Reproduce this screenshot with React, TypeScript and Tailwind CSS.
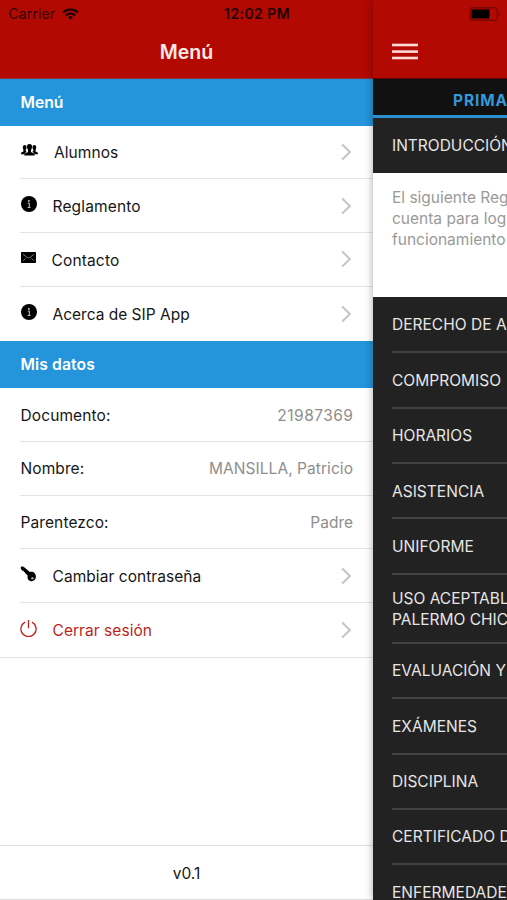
import type { ReactNode } from 'react';

const REGLAMENTO_ITEMS = ['DERECHO DE ADMISIÓN', 'COMPROMISO', 'HORARIOS', 'ASISTENCIA', 'UNIFORME'];

const REGLAMENTO_ITEMS_MORE = [
  'EVALUACIÓN Y PROMOCIÓN',
  'EXÁMENES',
  'DISCIPLINA',
  'CERTIFICADO DE SALUD',
  'ENFERMEDADES',
];

function PeopleIcon() {
  return (
    <svg viewBox="0 0 17 12" className="w-[17px] h-3 ml-px" fill="#000">
      <path d="M3.700 1c1.300 0 1.900.9 1.800 2.400 0 1-.3 1.800-.8 2.300v1.300l1 .8C4.900 8.300 3.800 9 3.500 10.300H0C0 8.900.4 8.400 1.300 8.100l1.100-.7V5.700C2 5.200 1.800 4.400 1.800 3.400 1.700 1.900 2.400 1 3.700 1z" />
      <path d="M13.300 1c-1.300 0-1.900.9-1.800 2.400 0 1 .3 1.800.8 2.300v1.300l-1 .8c.8.5 1.900 1.200 2.200 2.500H17c0-1.400-.4-1.900-1.300-2.200l-1.100-.7V5.700c.4-.5.6-1.300.6-2.300C15.300 1.900 14.600 1 13.300 1z" />
      <path d="M8.500 0c1.800 0 2.700 1.200 2.500 3.100-.1 1.400-.5 2.300-1 2.900v2l2 1c1.200.5 1.800 1.200 1.800 2.600H3.200c0-1.400.6-2.100 1.800-2.600l2-1V6c-.5-.6-.9-1.500-1-2.900C5.800 1.200 6.700 0 8.500 0z" />
    </svg>
  );
}

function InfoIcon() {
  return (
    <svg viewBox="0 0 16 16" className="w-4 h-4 ml-[0.500px]">
      <circle cx="8" cy="8" r="8" fill="#000" />
      <circle cx="7.900" cy="4.900" r="0.900" fill="#ddd" />
      <path d="M6.800 7.100h1.500v4.200M6.700 11.400h2.800" fill="none" stroke="#ccc" strokeWidth="1" />
    </svg>
  );
}

function MailIcon() {
  return (
    <svg viewBox="0 0 15 11" className="w-[15px] h-[11px] ml-[0.500px]">
      <rect width="15" height="11" rx="0.800" fill="#000" />
      <path d="M2 2.300l3.800 2.900c1.200.9 2.200.9 3.400 0L13 2.300M2.200 8.800l2.200-2.300M12.800 8.800l-2.200-2.300" fill="none" stroke="#999" strokeWidth="0.800" />
    </svg>
  );
}

function KeyIcon() {
  return (
    <svg viewBox="0 0 17 16" className="w-[17px] h-4">
      <path d="M.7 1.200L1.900.2l2 .8 6 5c1.700-.4 3.600 0 4.800 1.200 1.600 1.600 1.600 4.800.2 6.400-1.500 1.900-4.100 2.200-5.800.9-1.500-1.200-2-3.100-1.400-4.800L5.800 7.400l-.8-.2v-1l-1.100-.2-.1-1.100-1.200-.2L1 3.200z" fill="#000" />
      <circle cx="12.400" cy="12.300" r="1.200" fill="#aaa" />
    </svg>
  );
}

function PowerIcon() {
  return (
    <svg viewBox="0 0 17 17" className="w-[17px] h-[17px]" fill="none" stroke="currentColor" strokeWidth="1.300">
      <path d="M8.500 0v8.300M5 2.200a7.600 7.600 0 1 0 7 0" />
    </svg>
  );
}

function Chevron() {
  return (
    <svg viewBox="0 0 11 18" className="w-[11px] h-[18px] ml-auto -mt-px text-[#c5c5c9]" fill="none" stroke="currentColor" strokeWidth="2">
      <path d="M1.200 1.500L8.900 9l-7.700 7.500" />
    </svg>
  );
}

function SectionTitle({ children }: { children: ReactNode }) {
  return (
    <h2 className="h-full flex items-center pl-[20.500px] pt-[1.500px] text-[15.700px] font-semibold text-white">{children}</h2>
  );
}

type MenuRowProps = {
  icon: ReactNode;
  label: string;
  labelClass: string;
  className?: string;
  borderClass?: string;
};

function MenuRow({ icon, label, labelClass, className = '', borderClass = 'border-b border-[#e4e4e6]' }: MenuRowProps) {
  return (
    <div className={`h-[53.750px] ml-5 pr-[21px] pt-px flex items-center ${borderClass} ${className}`}>
      <span className="w-8 shrink-0 pb-[4px]">{icon}</span>
      <span className={`pt-px ${labelClass}`}>{label}</span>
      <Chevron />
    </div>
  );
}

function DataRow({ label, value, valueClass }: { label: string; value: string; valueClass: string }) {
  return (
    <div className="h-[53.750px] ml-5 pl-[0.500px] pr-5 pt-[1.500px] flex items-center justify-between border-b border-[#e4e4e6]">
      <span className="tracking-[0.100px]">{label}</span>
      <span className={`text-[#8e8e8e] ${valueClass}`}>{value}</span>
    </div>
  );
}

function SideMenu() {
  return (
    <aside className="w-[373px] h-full shrink-0 flex flex-col bg-white text-[15.500px] text-[#161616]">
      <header className="h-[79px] bg-[#b20903] border-b border-[#8d3233]">
        <div className="h-[27px] pl-[8.500px] flex items-center text-[14px] text-[#330200]">
          <span className="tracking-[0.100px]">Carrier</span>
          <svg viewBox="0 0 18 13" className="w-[17px] h-3 ml-[7px]" fill="none" stroke="#160000" strokeWidth="2.300">
            <path d="M1 4.800a11.500 11.500 0 0 1 16 0M4 8a7.200 7.200 0 0 1 10 0" />
            <path d="M9 12.500l-2.600-2.600a3.700 3.700 0 0 1 5.200 0z" fill="#160000" stroke="none" />
          </svg>
          <span className="ml-[145px] font-semibold text-[#200100] whitespace-nowrap tracking-[0.420px]">12:02 PM</span>
        </div>
        <h1 className="h-[50px] text-center text-[19.500px] leading-[50px] font-semibold text-[#ffe9e7]">Menú</h1>
      </header>
      <div className="h-[46.500px] bg-[#2494db]">
        <SectionTitle>Menú</SectionTitle>
      </div>
      <MenuRow icon={<PeopleIcon />} label="Alumnos" labelClass="pl-[2px] tracking-[0.080px]" />
      <MenuRow icon={<InfoIcon />} label="Reglamento" labelClass="pl-[0.500px] tracking-[0.150px]" />
      <MenuRow icon={<MailIcon />} label="Contacto" labelClass="-ml-[0.500px] tracking-[0.150px]" />
      <MenuRow icon={<InfoIcon />} label="Acerca de SIP App" labelClass="pl-[0.500px]" borderClass="" />
      <div className="h-[47.500px] bg-[#2494db]">
        <SectionTitle>
          <span className="tracking-[0.100px]">Mis datos</span>
        </SectionTitle>
      </div>
      <DataRow label="Documento:" value="21987369" valueClass="tracking-[0.480px] -mr-[0.480px]" />
      <DataRow label="Nombre:" value="MANSILLA, Patricio" valueClass="tracking-[0.060px]" />
      <DataRow label="Parentezco:" value="Padre" valueClass="" />
      <MenuRow icon={<KeyIcon />} label="Cambiar contraseña" labelClass="pl-[0.500px] tracking-[0.060px]" />
      <div className="border-b border-[#e4e4e6]">
        <MenuRow icon={<PowerIcon />} label="Cerrar sesión" labelClass="pl-[0.500px] tracking-[0.060px]" className="text-[#bd1f1c]" borderClass="" />
      </div>
      <footer className="mt-auto h-[55px] pt-[2px] flex items-center justify-center border-y border-[#dedede]">v0.1</footer>
    </aside>
  );
}

function ReglamentoItem({ label }: { label: string }) {
  return (
    <li className="h-[55.400px] pt-px flex items-center border-b-2 border-[#424242] whitespace-nowrap tracking-[0.020px]">
      {label}
    </li>
  );
}

function ReglamentoPage() {
  return (
    <main className="relative w-[134px] h-full shrink-0 flex flex-col bg-[#222] text-[15.500px] text-[#e6e6e6] shadow-[0_0_8px_rgba(0,0,0,0.350)]">
      <header className="h-[79px] shrink-0 bg-[#b20903] border-b border-[#5c0502]">
        <div className="h-[27px] flex items-center justify-end pr-1.5">
          <svg viewBox="0 0 32 14" className="w-8 h-3.5">
            <rect x="0.800" y="0.800" width="27.500" height="12.400" rx="2.500" fill="none" stroke="#7c0602" strokeWidth="1.400" />
            <rect x="2.500" y="2.500" width="18" height="9" rx="0.800" fill="#000" />
            <path d="M29.800 4.500c2.200 1 2.200 4 0 5z" fill="#7c0602" />
          </svg>
        </div>
        <svg viewBox="0 0 26 18" className="w-[26px] h-[18px] ml-[19px] mt-4" fill="#ffdad8">
          <rect y="0.700" width="26" height="2.600" />
          <rect y="7.300" width="26" height="2.600" />
          <rect y="13.700" width="26" height="2.600" />
        </svg>
      </header>
      <div className="h-[39px] shrink-0 flex items-center pl-20 pt-[7px] overflow-hidden bg-[#111] border-b-[3px] border-[#2b8fd0] font-bold text-[#3498db] tracking-[0.900px]">
        PRIMARIA
      </div>
      <div className="h-[55px] shrink-0 pl-[19px] pt-px flex items-center overflow-hidden whitespace-nowrap">INTRODUCCIÓN</div>
      <div className="h-[124px] shrink-0 pl-[19px] pt-[14px] bg-white text-[#999] leading-[21px] overflow-hidden whitespace-nowrap">
        <p>El siguiente Reglamento</p>
        <p>cuenta para lograr</p>
        <p>funcionamiento</p>
      </div>
      <ul className="pl-[19px] pt-[0.800px] overflow-hidden">
        {REGLAMENTO_ITEMS.map((label) => (
          <ReglamentoItem key={label} label={label} />
        ))}
        <li className="h-[69px] pt-px flex flex-col justify-center border-b-2 border-[#424242] leading-[21px] whitespace-nowrap">
          <span>USO ACEPTABLE</span>
          <span>PALERMO CHICO</span>
        </li>
        {REGLAMENTO_ITEMS_MORE.map((label) => (
          <ReglamentoItem key={label} label={label} />
        ))}
      </ul>
    </main>
  );
}

export default function App() {
  return (
    <div className="w-[507px] h-[900px] flex overflow-hidden font-['Inter','Liberation_Sans',sans-serif]">
      <SideMenu />
      <ReglamentoPage />
    </div>
  );
}
